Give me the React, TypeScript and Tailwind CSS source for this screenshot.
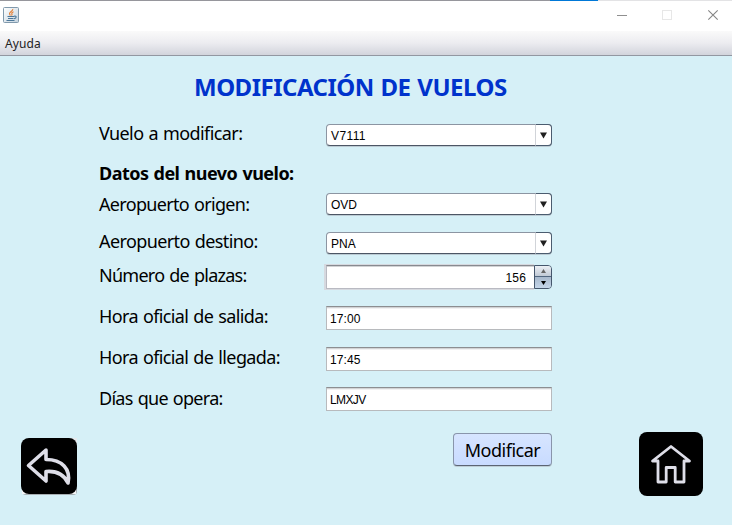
import React from 'react';

const ui = "font-['Noto_Sans','Open_Sans',sans-serif]";
const arial = "font-['Liberation_Sans',Arial,sans-serif]";

function TitleBar() {
  return (
    <header className="h-[31px] bg-white">
      <div className="flex h-px">
        <div className="w-[550px] bg-[#96969c]" />
        <div className="w-12 bg-[#0078d7]" />
        <div className="flex-1 bg-[#e3e3e5]" />
      </div>
      <div className="flex h-[30px] items-start justify-between pl-[3px] pr-[13px]">
        <svg className="mt-1.5" width="16" height="16" viewBox="0 0 16 16" fill="none">
          <defs>
            <linearGradient id="java" x1="0" y1="0" x2="1" y2="1">
              <stop stopColor="#ffffff" />
              <stop offset="1" stopColor="#c3d2de" />
            </linearGradient>
          </defs>
          <rect x=".5" y=".5" width="15" height="15" rx="1" fill="url(#java)" stroke="#8099ac" />
          <path d="M9.8 2C10.3 4 6.3 4.8 6.5 6.6C6.6 7.4 7.2 7.8 7.4 8.5M10.5 4.7C8.7 5.5 8.5 6.2 9 7C9.3 7.6 8.9 8.1 8.5 8.5" stroke="#e37b2e" strokeWidth="1.1" />
          <path d="M4.5 9.5H11M5 11.5H10.5M3.5 13.5H11.5M11 9.3C14 8.5 13.8 11.2 11 11.7" stroke="#4c7799" strokeWidth="1.1" />
        </svg>
        <svg className="mt-2" width="104" height="12" viewBox="0 0 104 12" fill="none">
          <path d="M2 6.5H12" stroke="#8f8f8f" />
          <rect x="47.5" y="1.5" width="9" height="9" stroke="#e7e7e7" />
          <path d="M93.3 1.3L102.7 10.7M102.7 1.3L93.3 10.7" stroke="#858585" strokeWidth="1.1" />
        </svg>
      </div>
    </header>
  );
}

function Combo({ value, track = '' }: { value: string; track?: string }) {
  return (
    <div className="flex h-[22px] w-[226px] rounded-[4px] border border-[#8c95a2] border-b-[#4c5665] bg-white shadow-[0_1px_0_#bccbd3]">
      <span className={`${arial} flex-1 pl-1 text-[12px] leading-[22px] ${track}`}>{value}</span>
      <div className="-my-px -mr-px flex w-[17px] items-center justify-center rounded-r-[4px] border border-[#4b5c6f] border-l-[#d1d4d9] bg-white">
        <svg width="7" height="7" viewBox="0 0 7 7"><path d="M0 .5H7L3.5 6.5Z" fill="#202020" /></svg>
      </div>
    </div>
  );
}

function Field({ value, track = '' }: { value: string; track?: string }) {
  return (
    <div className={`${arial} h-6 w-[226px] border border-[#b8babd] border-t-[#8c8e91] bg-white pl-[3px] text-[12px] leading-[24px] shadow-[inset_0_1px_0_#d2d3d5,inset_0_2px_0_#f1f1f2] ${track}`}>
      {value}
    </div>
  );
}

function Spinner({ value }: { value: string }) {
  return (
    <div className="flex h-[25px] w-[226px]">
      <div className={`${arial} mt-px h-6 w-[209px] border border-r-0 border-[#b9bac2] border-t-[#888a90] bg-white pr-2 text-right text-[12px] leading-[24px] tracking-[0.2px] shadow-[inset_0_1px_0_#d2d3d5,-1px_0_0_1px_#d6d9df]`}>
        {value}
      </div>
      <div className="relative mt-px flex h-6 w-[18px] flex-col overflow-hidden rounded-r-[4px] border border-[#45566c]">
        <div className="flex h-[11px] items-center justify-center border-b border-[#526780] bg-linear-to-b from-[#edf0f5] to-[#c1cad6]">
          <svg width="5" height="4" viewBox="0 0 5 4"><path d="M0 4H5L2.5 0Z" fill="#666" /></svg>
        </div>
        <div className="flex flex-1 items-center justify-center bg-linear-to-b from-[#a8b9cd] to-[#c5d6e9]">
          <svg width="5" height="4" viewBox="0 0 5 4"><path d="M0 0H5L2.5 4Z" fill="#000" /></svg>
        </div>
      </div>
    </div>
  );
}

type RowProps = { label: string; row: string; track: string; pad?: string; children?: React.ReactNode };

function Row({ label, row, track, pad = '', children }: RowProps) {
  return (
    <div className={`flex ${row}`}>
      <div className={`w-[227px] shrink-0 whitespace-nowrap text-[18px] leading-6 [word-spacing:1px] ${track}`}>{label}</div>
      <div className={pad}>{children}</div>
    </div>
  );
}

export default function App() {
  return (
    <div className={`${ui} h-[525px] w-[732px] overflow-hidden bg-[#d6f0f7] text-black`}>
      <TitleBar />
      <nav className="h-[25px] border-b border-[#9297a1] bg-linear-to-b from-[#fafafa] via-[#ececf0] to-[#d2d4dc] pl-[5px] text-[12px] leading-[25px] tracking-[0.1px] text-[#222]">
        Ayuda
      </nav>
      <main className="flex flex-col">
        <h1 className="mt-[15px] h-8 whitespace-nowrap pl-[194px] text-[24px] font-bold leading-8 tracking-[-0.5px] text-[#0033cc] [word-spacing:1px]">
          MODIFICACIÓN DE VUELOS
        </h1>
        <section className="mt-[18px] pl-[99px]">
          <Row label="Vuelo a modificar:" row="h-10" track="tracking-[-0.6px]" pad="pt-[3px]"><Combo value="V7111" track="tracking-[0.4px]" /></Row>
          <Row label="Datos del nuevo vuelo:" row="h-[31px] font-bold" track="tracking-[-0.53px]" />
          <Row label="Aeropuerto origen:" row="h-[37px]" track="tracking-[-0.68px]" pad="pt-px"><Combo value="OVD" /></Row>
          <Row label="Aeropuerto destino:" row="h-[34px]" track="tracking-[-0.61px]" pad="pt-[3px]"><Combo value="PNA" /></Row>
          <Row label="Número de plazas:" row="h-[41px]" track="tracking-[-0.74px]" pad="pt-px"><Spinner value="156" /></Row>
          <Row label="Hora oficial de salida:" row="h-[41px]" track="tracking-[-0.63px]" pad="pt-[2px]"><Field value="17:00" track="tracking-[0.1px]" /></Row>
          <Row label="Hora oficial de llegada:" row="h-[41px]" track="tracking-[-0.63px]" pad="pt-[2px]"><Field value="17:45" track="tracking-[0.1px]" /></Row>
          <Row label="Días que opera:" row="h-[46px]" track="tracking-[-0.71px]" pad="pt-px"><Field value="LMXJV" track="tracking-[-0.6px]" /></Row>
        </section>
        <footer className="flex items-start pl-[21px]">
          <button className="mt-1.5 h-[57px] w-14" aria-label="Volver">
            <svg width="56" height="57" viewBox="0 0 56 57">
              <rect x="1" y="2" width="55" height="55" rx="4" fill="#a8aeb2" />
              <path d="M48 0H56V8Z" fill="#e6e9ec" />
              <path d="M1 49V56H8ZM55 49V56H48Z" fill="#f4f5f6" />
              <rect width="56" height="56" rx="8" fill="#000" />
              <path d="M25 12L7.5 27.5L25 43V33.5C36 32.5 43 36.5 47 45C50 31 41 21.5 25 21.5Z" fill="none" stroke="#dedee8" strokeWidth="3.6" strokeLinejoin="round" />
            </svg>
          </button>
          <button className="ml-[376px] mt-px h-[33px] w-[99px] whitespace-nowrap rounded-[4px] border border-[#8995ab] border-b-[#5b6473] bg-linear-to-b from-[#d7e5ff] to-[#c8dbff] text-[18px] leading-8 tracking-[-0.5px] shadow-[0_1px_0_#bdcdd5]">
            Modificar
          </button>
          <button className="ml-[87px] h-16 w-16" aria-label="Inicio">
            <svg width="64" height="64" viewBox="0 0 64 64">
              <rect width="64" height="64" rx="8" fill="#000" />
              <path d="M32 14.5L13.5 29H19V50H27.2V35.5H36.2V50H45V29H50.5Z" fill="none" stroke="#dedee8" strokeWidth="2.8" strokeLinejoin="round" />
            </svg>
          </button>
        </footer>
      </main>
    </div>
  );
}
